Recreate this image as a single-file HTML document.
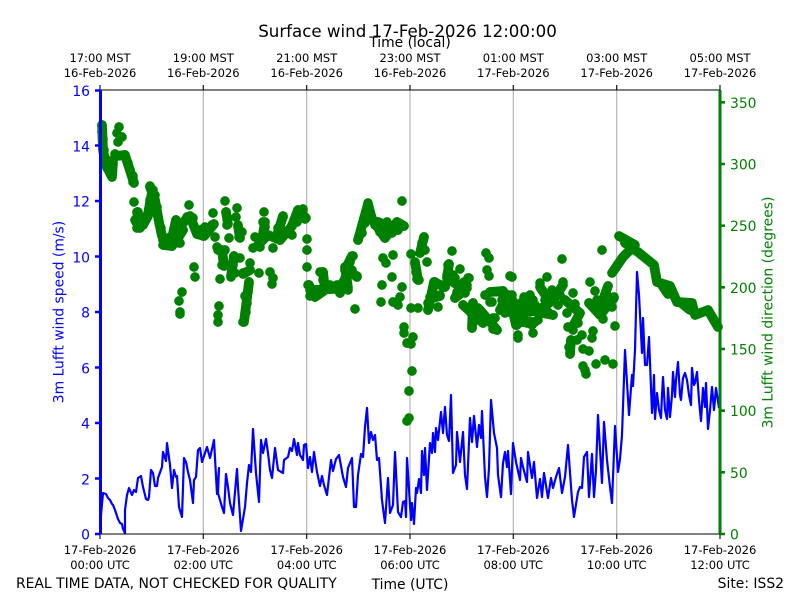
<!DOCTYPE html>
<html><head><meta charset="utf-8"><style>
html,body{margin:0;padding:0;background:#fff}
svg{display:block}
text{font-family:"DejaVu Sans",sans-serif}
</style></head><body>
<svg width="800" height="600" viewBox="0 0 800 600" xmlns="http://www.w3.org/2000/svg">
<rect width="800" height="600" fill="#fff"/>
<g stroke="#b0b0b0" stroke-width="1.1"><path d="M203.3 90V534M306.7 90V534M410 90V534M513.3 90V534M616.7 90V534"/></g>
<path fill="none" stroke="#008000" stroke-width="9.7" stroke-linecap="round" stroke-linejoin="round" d="M102 125h0M102 132h0M103 139h0M119 127h0M117 133h0M122 137h0M118 142h0M104 150h0M105 160h0M107 168h0M112 175h0M110 170h0M113 160h0M115 154h0M125 155h0M128 163h0M130 170h0M133 176h0M133 182h0M134 202h0M138 212h0M135 220h0M137 228h0M143 225h0M145 217h0M150 200h0M150 186h0M153 190h0M155 195h0M157 207h0M158 217h0M161 228h0M163 238h0M163 245h0M172 246h0M168 238h0M178 238h0M176 220h0M175 230h0M183 230h0M187 217h0M189 205h0M193 218h0M197 234h0M203 236h0M205 227h0M212 225h0M213 213h0M215 237h0M217 247h0M218 250h0M225 201h0M226 212h0M227 225h0M229 238h0M225 250h0M223 258h0M222 265h0M220 279h0M194 267h0M195 277h0M182 292h0M179 301h0M180 312h0M180 314h0M219 306h0M218 315h0M218 322h0M237 208h0M236 217h0M238 225h0M242 232h0M239 237h0M234 256h0M240 258h0M233 265h0M235 273h0M231 277h0M243 273h0M250 263h0M250 270h0M259 273h0M249 282h0M248 292h0M245 296h0M247 303h0M246 312h0M243 322h0M270 272h0M273 278h0M272 284h0M264 212h0M263 222h0M265 227h0M255 237h0M253 248h0M260 247h0M268 235h0M273 248h0M280 240h0M278 228h0M283 217h0M292 235h0M292 225h0M297 222h0M298 210h0M303 209h0M305 218h0M307 239h0M307 250h0M307 267h0M308 285h0M310 290h0M310 296h0M303 210h0M305 219h0M309 285h0M312 292h0M315 297h0M320 290h0M320 272h0M323 272h0M323 280h0M330 285h0M337 285h0M340 293h0M343 282h0M348 290h0M345 267h0M352 270h0M357 276h0M353 256h0M350 262h0M355 309h0M358 240h0M362 233h0M365 223h0M368 203h0M367 210h0M372 218h0M378 222h0M380 232h0M385 238h0M387 222h0M392 233h0M397 222h0M398 230h0M404 226h0M402 201h0M383 258h0M386 263h0M393 255h0M392 277h0M382 285h0M381 302h0M393 302h0M398 305h0M400 297h0M402 287h0M411 254h0M415 263h0M416 272h0M417 279h0M419 280h0M427 262h0M424 237h0M422 243h0M425 250h0M420 253h0M411 308h0M418 308h0M404 327h0M404 333h0M413 337h0M407 343h0M411 344h0M412 371h0M409 391h0M407 421h0M409 418h0M428 310h0M428 303h0M433 293h0M434 282h0M438 307h0M440 295h0M445 287h0M455 298h0M457 292h0M465 293h0M467 285h0M469 278h0M460 269h0M455 278h0M447 275h0M449 264h0M452 251h0M463 305h0M473 303h0M472 315h0M472 328h0M480 317h0M483 323h0M478 308h0M486 295h0M490 292h0M490 302h0M486 253h0M489 258h0M487 270h0M489 276h0M493 318h0M493 329h0M497 330h0M500 310h0M503 291h0M502 300h0M508 295h0M510 302h0M508 312h0M510 276h0M513 312h0M516 325h0M518 338h0M520 315h0M512 277h0M512 295h0M513 313h0M517 325h0M518 338h0M525 308h0M527 297h0M520 320h0M527 323h0M533 333h0M538 320h0M532 325h0M533 300h0M540 283h0M547 277h0M542 290h0M537 308h0M543 307h0M552 290h0M553 315h0M550 302h0M560 295h0M563 282h0M562 259h0M565 300h0M567 313h0M573 293h0M575 304h0M580 313h0M578 323h0M568 327h0M573 330h0M571 340h0M569 347h0M570 354h0M577 340h0M582 335h0M593 331h0M592 338h0M583 349h0M589 351h0M583 366h0M585 370h0M586 374h0M596 364h0M605 360h0M613 364h0M615 326h0M589 303h0M590 282h0M595 291h0M597 300h0M600 315h0M603 319h0M602 250h0M608 286h0M607 295h0M614 297h0M612 307h0M602 305h0M535 305h0M545 300h0M555 298h0M540 312h0M548 312h0M530 312h0M558 305h0M522 312h0M530 295h0M435 282h0M433 288h0M430 297h0M443 287h0M448 265h0M448 273h0M453 275h0M468 278h0M467 288h0M485 295h0M492 302h0M495 318h0M495 328h0M503 303h0M505 313h0M518 323h0M518 335h0M525 322h0M524 297h0"/>
<path fill="none" stroke="#008000" stroke-width="9.7" stroke-linecap="round" stroke-linejoin="round" d="M102 125L103 150L106 165L112 177L113 162M104 155L110 172M116 156L125 155L134 183M137 212L140 228M148 216L143 225L136 222M150 187L155 200L159 222L162 236M152 192L148 214M164 238L164 245L172 246L178 238L183 230M176 220L172 238M163 240L180 243M187 218L176 232M190 216L197 234L204 236L214 224M205 228L197 232M226 212L228 224M222 250L224 266M234 256L231 276M243 274L250 270M249 282L244 322M238 226L240 238M258 245L268 235L280 240L292 226L298 210L306 218M265 222L262 240M283 216L278 232M309 285L315 297L325 290L323 272M315 290L348 288L345 267L357 277M340 293L348 270M352 256L345 270M358 240L368 204L372 219L385 238L397 222L404 226M378 222L398 230M375 225L392 232M415 262L418 280M424 237L420 253M428 310L434 282L445 287M432 298L440 296M449 264L447 278L465 290L455 298L464 282M463 305L483 323M473 303L472 328M480 310L497 330M490 292L503 291L513 312L516 325L524 318M500 310L508 295L516 305M513 312L527 297L537 312L553 300L563 285M518 322L535 322M527 310L553 315M540 287L550 302M565 300L580 313L572 328M571 340L570 354M589 303L600 315L614 298M603 300L608 286M612 273L623 257L635 245L619 236M625 243L638 252L654 265L657 282L670 286L677 302L692 303L695 315L708 310L718 327M662 285L668 294M680 302L690 310"/>
<polyline fill="none" stroke="#0000ff" stroke-width="2.2" stroke-linejoin="round" points="100,534 101,515 103,493 106,494 108,498 110,500 112,504 113,505 115,510 117,516 118,519 120,523 122,524 123,529 125,533 125,510 127,495 129,488 132,495 134,490 136,492 138,478 141,476 143,487 146,499 148,500 149,497 151,470 153,473 155,486 157,486 158,478 162,467 163,452 166,461 167,443 170,465 172,488 174,470 176,477 177,476 179,507 182,517 184,458 186,462 188,472 190,480 193,503 194,480 196,477 198,450 200,448 202,462 205,453 207,447 210,458 214,440 217,494 219,468 218,493 222,507 224,513 226,474 228,487 230,503 233,515 237,469 238,487 241,531 245,507 247,483 249,465 251,472 253,429 256,473 259,502 261,440 263,453 266,439 268,453 270,470 272,478 275,448 278,470 283,473 284,460 288,457 290,448 292,451 294,439 297,455 298,443 300,455 303,460 304,445 306,444 308,468 310,457 312,472 314,452 317,472 320,486 322,476 324,485 327,495 331,460 333,471 336,459 339,455 343,477 346,487 348,468 352,458 354,507 356,507 358,475 361,454 363,457 365,427 367,408 369,443 371,432 373,440 375,435 377,460 379,458 382,500 383,508 385,523 388,478 390,513 393,505 395,452 398,512 401,517 403,502 405,501 406,517 407,458 411,520 412,503 414,524 416,488 417,493 419,479 421,493 422,451 424,475 425,448 427,490 430,443 432,453 433,433 435,452 436,428 438,440 441,412 443,433 445,407 447,435 449,441 451,395 453,473 456,465 457,432 460,462 463,432 465,475 467,489 470,418 472,442 474,416 477,447 479,425 481,438 482,411 485,477 487,497 489,468 491,400 494,433 497,448 498,475 501,497 503,463 505,452 507,467 508,451 511,494 513,443 516,462 520,480 521,458 523,467 527,482 528,452 532,478 534,462 537,498 540,479 542,497 544,473 548,498 551,478 553,488 556,477 559,468 562,493 565,477 568,445 572,500 574,517 578,492 580,487 582,488 584,457 587,452 589,497 592,454 594,497 596,470 598,415 602,483 604,422 607,460 610,487 612,503 615,426 618,472 620,459 622,435 625,350 629,415 632,375 633,386 635,350 637,272 639,295 642,353 643,318 645,365 647,365 649,337 652,413 653,400 654,375 655,419 657,393 659,410 661,418 662,395 663,377 665,410 667,419 668,388 670,417 672,395 673,372 675,397 676,380 678,362 680,395 681,400 683,378 685,373 687,380 689,395 691,405 692,368 694,385 695,383 697,372 699,400 701,421 702,405 703,388 705,407 706,383 708,429 710,410 712,387 714,410 716,388 719,408"/>
<path stroke="#000" stroke-width="1.1" d="M100 90H720M100 534H720"/>
<path stroke="#0000ff" stroke-width="3" d="M100.5 90V534"/>
<path stroke="#008000" stroke-width="3" d="M720 90V534"/>
<path stroke="#000" stroke-width="1.1" d="M100 534v5M203.3 534v5M306.7 534v5M410 534v5M513.3 534v5M616.7 534v5M720 534v5M100 90v-5M203.3 90v-5M306.7 90v-5M410 90v-5M513.3 90v-5M616.7 90v-5M720 90v-5"/>
<path stroke="#0000ff" stroke-width="2.6" d="M95 534h5M95 478.5h5M95 423h5M95 367.5h5M95 312h5M95 256.5h5M95 201h5M95 145.5h5M95 90.5h5"/>
<path stroke="#008000" stroke-width="2.6" d="M720 534h5M720 472.3h5M720 410.7h5M720 349h5M720 287.3h5M720 225.7h5M720 164h5M720 102.3h5"/>
<g font-size="13.9" fill="#0000ff" text-anchor="end"><text x="90" y="539.5">0</text><text x="90" y="484.5">2</text><text x="90" y="428.5">4</text><text x="90" y="373.5">6</text><text x="90" y="317.5">8</text><text x="90" y="262.5">10</text><text x="90" y="206.5">12</text><text x="90" y="151.5">14</text><text x="90" y="96">16</text></g>
<g font-size="13.9" fill="#008000"><text x="730" y="539.5">0</text><text x="730" y="478">50</text><text x="730" y="416">100</text><text x="730" y="354.5">150</text><text x="730" y="293">200</text><text x="730" y="231">250</text><text x="730" y="169.5">300</text><text x="730" y="108">350</text></g>
<g font-size="11.5" fill="#000" text-anchor="middle">
<text x="100" y="554">17-Feb-2026</text><text x="100" y="569">00:00 UTC</text>
<text x="203.3" y="554">17-Feb-2026</text><text x="203.3" y="569">02:00 UTC</text>
<text x="306.7" y="554">17-Feb-2026</text><text x="306.7" y="569">04:00 UTC</text>
<text x="410" y="554">17-Feb-2026</text><text x="410" y="569">06:00 UTC</text>
<text x="513.3" y="554">17-Feb-2026</text><text x="513.3" y="569">08:00 UTC</text>
<text x="616.7" y="554">17-Feb-2026</text><text x="616.7" y="569">10:00 UTC</text>
<text x="720" y="554">17-Feb-2026</text><text x="720" y="569">12:00 UTC</text>
<text x="100" y="62">17:00 MST</text><text x="100" y="77">16-Feb-2026</text>
<text x="203.3" y="62">19:00 MST</text><text x="203.3" y="77">16-Feb-2026</text>
<text x="306.7" y="62">21:00 MST</text><text x="306.7" y="77">16-Feb-2026</text>
<text x="410" y="62">23:00 MST</text><text x="410" y="77">16-Feb-2026</text>
<text x="513.3" y="62">01:00 MST</text><text x="513.3" y="77">17-Feb-2026</text>
<text x="616.7" y="62">03:00 MST</text><text x="616.7" y="77">17-Feb-2026</text>
<text x="720" y="62">05:00 MST</text><text x="720" y="77">17-Feb-2026</text>
</g>
<text x="407.5" y="37" font-size="16.67" text-anchor="middle" fill="#000">Surface wind 17-Feb-2026 12:00:00</text>
<text x="410" y="47" font-size="13.9" text-anchor="middle" fill="#000">Time (local)</text>
<text x="410" y="589" font-size="13.9" text-anchor="middle" fill="#000">Time (UTC)</text>
<text x="16" y="588" font-size="13.9" fill="#000">REAL TIME DATA, NOT CHECKED FOR QUALITY</text>
<text x="784" y="588" font-size="13.9" text-anchor="end" fill="#000">Site: ISS2</text>
<text transform="translate(63.5 312) rotate(-90)" font-size="13.9" text-anchor="middle" fill="#0000ff">3m Lufft wind speed (m/s)</text>
<text transform="translate(772.5 312.5) rotate(-90)" font-size="13.9" text-anchor="middle" fill="#008000">3m Lufft wind direction (degrees)</text>
</svg>
</body></html>
